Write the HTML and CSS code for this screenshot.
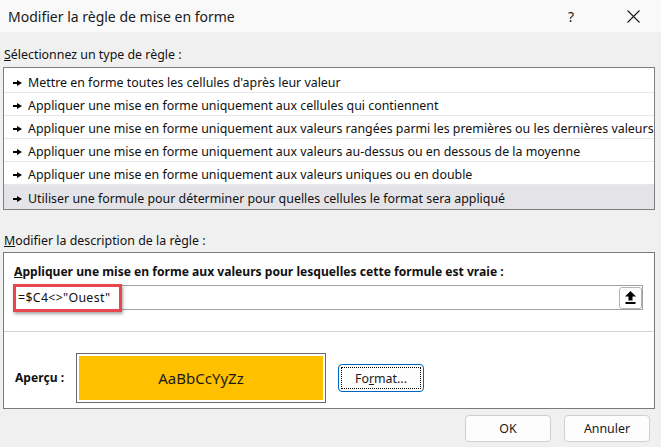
FILE: index.html
```html
<!DOCTYPE html>
<html lang="fr">
<head>
<meta charset="utf-8">
<title>Modifier la règle de mise en forme</title>
<link rel="stylesheet" href="styles.css">
</head>
<body>
<div class="dialog">
  <div class="titlebar">
    <span class="title">Modifier la règle de mise en forme</span>
    <span class="help">?</span>
    <span class="close"><svg width="13" height="13" viewBox="0 0 13 13"><path d="M0.5 0.5L12.5 12.5M12.5 0.5L0.5 12.5" stroke="#1a1a1a" stroke-width="1.1"/></svg></span>
  </div>
  <div class="main">
    <div class="label label-first"><u>S</u>électionnez un type de règle :</div>
    <div class="list">
      <div class="row"><svg class="arrow" width="9" height="6" viewBox="0 0 9 6"><path d="M0 2H4V0L9 3L4 6V4H0Z" fill="#000"/></svg>Mettre en forme toutes les cellules d'après leur valeur</div>
      <div class="row"><svg class="arrow" width="9" height="6" viewBox="0 0 9 6"><path d="M0 2H4V0L9 3L4 6V4H0Z" fill="#000"/></svg>Appliquer une mise en forme uniquement aux cellules qui contiennent</div>
      <div class="row"><svg class="arrow" width="9" height="6" viewBox="0 0 9 6"><path d="M0 2H4V0L9 3L4 6V4H0Z" fill="#000"/></svg>Appliquer une mise en forme uniquement aux valeurs rangées parmi les premières ou les dernières valeurs</div>
      <div class="row"><svg class="arrow" width="9" height="6" viewBox="0 0 9 6"><path d="M0 2H4V0L9 3L4 6V4H0Z" fill="#000"/></svg>Appliquer une mise en forme uniquement aux valeurs au-dessus ou en dessous de la moyenne</div>
      <div class="row"><svg class="arrow" width="9" height="6" viewBox="0 0 9 6"><path d="M0 2H4V0L9 3L4 6V4H0Z" fill="#000"/></svg>Appliquer une mise en forme uniquement aux valeurs uniques ou en double</div>
      <div class="row row-selected"><svg class="arrow" width="9" height="6" viewBox="0 0 9 6"><path d="M0 2H4V0L9 3L4 6V4H0Z" fill="#000"/></svg>Utiliser une formule pour déterminer pour quelles cellules le format sera appliqué</div>
    </div>
    <div class="label label-second"><u>M</u>odifier la description de la règle :</div>
    <div class="desc">
      <div class="desc-top">
        <div class="bold"><u>A</u>ppliquer une mise en forme aux valeurs pour lesquelles cette formule est vraie :</div>
        <div class="input-row">
          <div class="input">
            <span class="formula">=$C4&lt;&gt;"Ouest"</span>
            <span class="upload"><svg width="11" height="13" viewBox="0 0 11 13"><path d="M5.5 0L11 5.5H7.5V9.5H3.5V5.5H0Z" fill="#000"/><rect x="0.5" y="11" width="10" height="2" fill="#000"/></svg></span>
          </div>
          <div class="highlight"></div>
        </div>
      </div>
      <div class="desc-bottom">
        <span class="bold preview-label">Aperçu :</span>
        <div class="preview"><div class="preview-fill">AaBbCcYyZz</div></div>
        <div class="btn btn-format"><span class="focus">Fo<u>r</u>mat...</span></div>
      </div>
    </div>
    <div class="footer">
      <div class="btn btn-footer">OK</div>
      <div class="btn btn-footer">Annuler</div>
    </div>
  </div>
</div>
</body>
</html>
```
FILE: styles.css
```css
* { box-sizing: border-box; }
html, body { margin: 0; padding: 0; }
body {
  width: 661px;
  height: 447px;
  overflow: hidden;
  background: #f0f0f0;
  font-family: "Noto Sans", "Open Sans", sans-serif;
  font-size: 12.4px;
  color: #111;
}
.dialog { width: 661px; height: 447px; display: flex; flex-direction: column; }
.titlebar {
  height: 32px;
  background: #f9f9f9;
  display: flex;
  align-items: center;
  padding-left: 8px;
}
.title { font-size: 14px; flex: 1; color: #1a1a1a; }
.help { font-size: 14px; width: 14px; margin-right: 45px; color: #1a1a1a; }
.close { width: 13px; height: 13px; margin-right: 21px; display: flex; }
.main { padding: 0 6px 0 3px; display: flex; flex-direction: column; }
.label { height: 20px; line-height: 20px; padding-left: 1px; }
.label-first { margin-top: 13px; margin-bottom: 2px; }
.label-second { margin-top: 21px; margin-bottom: 1px; }
.list {
  border: 1px solid #7f7f7f;
  background: #fff;
  display: flex;
  flex-direction: column;
  padding-top: 2px;
}
.row {
  height: 23px;
  border-bottom: 1px solid #e8e8e8;
  display: flex;
  align-items: center;
  white-space: nowrap;
  padding-left: 9px;
  padding-top: 2px;
}
.row-selected { background: #e4e4e8; border-bottom: none; height: 24px; }
.arrow { margin-right: 6px; margin-top: 1px; flex: none; }
.desc {
  border: 1px solid #7a7a7a;
  background: #fff;
  display: flex;
  flex-direction: column;
}
.desc-top { padding: 10px 11px 21px 9px; border-bottom: 1px solid #d4d4d4; }
.bold { font-weight: bold; font-size: 12.1px; line-height: 18px; padding-left: 1px; }
.input-row { position: relative; margin-top: 4px; }
.input {
  height: 25px;
  border: 1px solid #a0a0a0;
  display: flex;
  align-items: center;
  padding-left: 3px;
  margin-left: 1px;
}
.formula { flex: 1; letter-spacing: 0.3px; }
.upload {
  width: 23px;
  height: 22px;
  border: 1px solid #b4b4b4;
  border-radius: 3px;
  background: #fdfdfd;
  display: flex;
  align-items: center;
  justify-content: center;
}
.highlight {
  position: absolute;
  left: 0;
  top: -1px;
  width: 109px;
  height: 28px;
  border: 3px solid #e8474f;
  box-shadow: 1px 2px 3px rgba(0,0,0,0.35);
  pointer-events: none;
}
.desc-bottom {
  display: flex;
  align-items: center;
  padding: 21px 0 5px 10px;
}
.preview-label { width: 62px; }
.preview {
  width: 250px;
  height: 50px;
  border: 1px solid #6a6a6a;
  padding: 2px;
  margin-right: 12px;
}
.preview-fill {
  height: 100%;
  background: #ffc000;
  display: flex;
  align-items: center;
  justify-content: center;
  font-size: 15px;
  color: #1a1a1a;
}
.btn {
  background: #fdfdfd;
  border: 1px solid #d0d0d0;
  border-radius: 4px;
  display: flex;
  align-items: center;
  justify-content: center;
  color: #1a1a1a;
}
.btn-format {
  width: 86px;
  height: 28px;
  border: 1px solid #0067c0;
  padding: 2px;
}
.focus {
  flex: 1;
  height: 100%;
  border: 1px dotted #000;
  display: flex;
  align-items: center;
  justify-content: center;
}
.footer {
  display: flex;
  justify-content: flex-end;
  gap: 13px;
  margin-top: 6px;
  padding-right: 5px;
}
.btn-footer { width: 86px; height: 27px; }
```
